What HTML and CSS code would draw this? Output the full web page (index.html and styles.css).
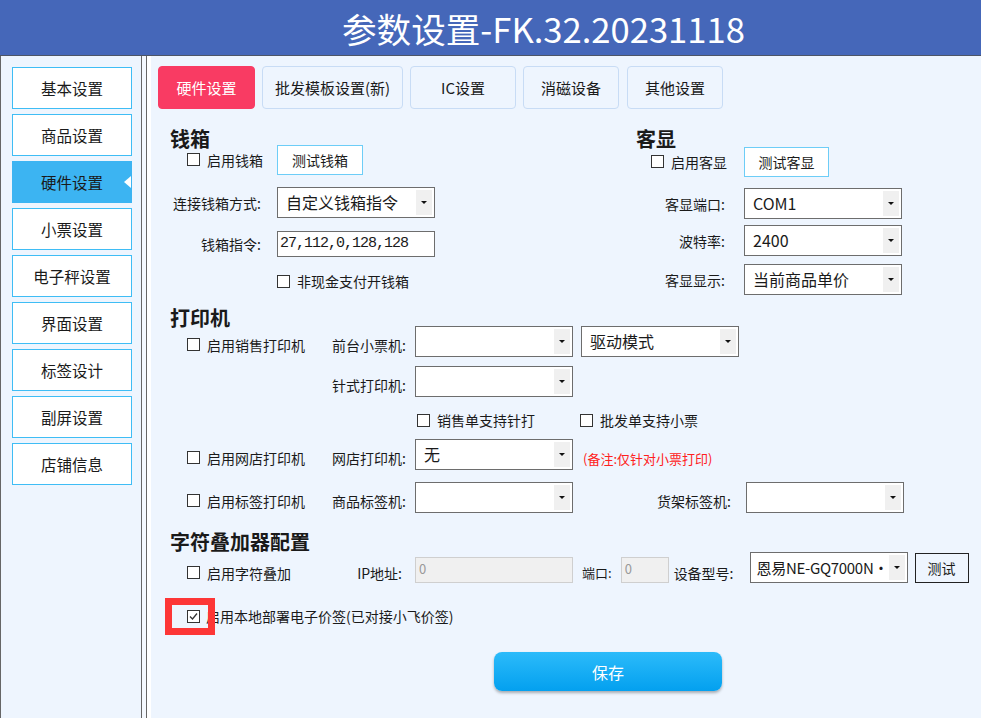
FILE: index.html
```html
<!DOCTYPE html>
<html lang="zh-CN">
<head>
    <meta charset="UTF-8">
    <meta name="viewport" content="width=device-width, initial-scale=1.0">
    <title>参数设置</title>
    <link rel="stylesheet" href="styles.css">
</head>
<body>
    <div class="header">
        <h1>参数设置-FK.32.20231118</h1>
    </div>
    <div class="layout">
        <aside class="sidebar">
            <div class="nav-item">基本设置</div>
            <div class="nav-item">商品设置</div>
            <div class="nav-item active">硬件设置</div>
            <div class="nav-item">小票设置</div>
            <div class="nav-item">电子秤设置</div>
            <div class="nav-item">界面设置</div>
            <div class="nav-item">标签设计</div>
            <div class="nav-item">副屏设置</div>
            <div class="nav-item">店铺信息</div>
        </aside>
        <div class="divider"></div>
        <main class="main">
            <div class="tabs">
                <div class="tab tab-hw active">硬件设置</div>
                <div class="tab tab-tpl">批发模板设置(新)</div>
                <div class="tab tab-ic">IC设置</div>
                <div class="tab tab-mag">消磁设备</div>
                <div class="tab tab-other">其他设置</div>
            </div>

            <div class="panel">
                <div class="cols">
                    <section class="col-cash">
                        <h2 class="group">钱箱</h2>
                        <div class="row cash-enable">
                            <div class="check-cell"><span class="check"><span class="box"></span>启用钱箱</span></div>
                            <button class="btn-test">测试钱箱</button>
                        </div>
                        <div class="row cash-mode">
                            <div class="lbl">连接钱箱方式:</div>
                            <div class="combo"><span class="combo-text">自定义钱箱指令</span><span class="combo-arrow"></span></div>
                        </div>
                        <div class="row cash-cmd">
                            <div class="lbl">钱箱指令:</div>
                            <div class="text-input mono">27,112,0,128,128</div>
                        </div>
                        <div class="row cash-noncash">
                            <span class="check"><span class="box"></span>非现金支付开钱箱</span>
                        </div>
                    </section>

                    <section class="col-display">
                        <h2 class="group">客显</h2>
                        <div class="row disp-enable">
                            <div class="check-cell"><span class="check"><span class="box"></span>启用客显</span></div>
                            <button class="btn-test btn-disp">测试客显</button>
                        </div>
                        <div class="row disp-port">
                            <div class="lbl">客显端口:</div>
                            <div class="combo"><span class="combo-text">COM1</span><span class="combo-arrow"></span></div>
                        </div>
                        <div class="row disp-baud">
                            <div class="lbl">波特率:</div>
                            <div class="combo"><span class="combo-text">2400</span><span class="combo-arrow"></span></div>
                        </div>
                        <div class="row disp-show">
                            <div class="lbl">客显显示:</div>
                            <div class="combo"><span class="combo-text">当前商品单价</span><span class="combo-arrow"></span></div>
                        </div>
                    </section>
                </div>

                <section class="printer">
                    <h2 class="group">打印机</h2>
                    <div class="row prow prow-first">
                        <div class="pcheck shift"><span class="check"><span class="box"></span>启用销售打印机</span></div>
                        <div class="plbl shift">前台小票机:</div>
                        <div class="combo"><span class="combo-text"></span><span class="combo-arrow"></span></div>
                        <div class="combo combo-mode"><span class="combo-text">驱动模式</span><span class="combo-arrow"></span></div>
                    </div>
                    <div class="row prow prow-dot">
                        <div class="pcheck"></div>
                        <div class="plbl shift">针式打印机:</div>
                        <div class="combo"><span class="combo-text"></span><span class="combo-arrow"></span></div>
                    </div>
                    <div class="row prow-opts">
                        <span class="check opt-sale"><span class="box"></span>销售单支持针打</span>
                        <span class="check"><span class="box"></span>批发单支持小票</span>
                    </div>
                    <div class="row prow prow-web">
                        <div class="pcheck shift"><span class="check"><span class="box"></span>启用网店打印机</span></div>
                        <div class="plbl shift">网店打印机:</div>
                        <div class="combo"><span class="combo-text">无</span><span class="combo-arrow"></span></div>
                        <span class="note shift">(备注:仅针对小票打印)</span>
                    </div>
                    <div class="row prow prow-label">
                        <div class="pcheck shift"><span class="check"><span class="box"></span>启用标签打印机</span></div>
                        <div class="plbl shift">商品标签机:</div>
                        <div class="combo"><span class="combo-text"></span><span class="combo-arrow"></span></div>
                        <div class="shelf-lbl shift">货架标签机:</div>
                        <div class="combo"><span class="combo-text"></span><span class="combo-arrow"></span></div>
                    </div>
                </section>

                <section class="overlay">
                    <h2 class="group">字符叠加器配置</h2>
                    <div class="row overlay-row">
                        <div class="pcheck"><span class="check"><span class="box"></span>启用字符叠加</span></div>
                        <div class="plbl ip-lbl">IP地址:</div>
                        <div class="text-input disabled ip-input">0</div>
                        <span class="small-lbl port-lbl">端口:</span>
                        <div class="text-input disabled port-input">0</div>
                        <span class="small-lbl model-lbl">设备型号:</span>
                        <div class="combo combo-model"><span class="combo-text">恩易NE-GQ7000N·</span><span class="combo-arrow"></span></div>
                        <button class="btn-plain">测试</button>
                    </div>
                </section>

                <div class="row price-tag">
                    <span class="highlight"></span>
                    <span class="check"><span class="box checked"><svg width="11" height="11" viewBox="0 0 11 11"><polyline points="2,5.5 4.5,8 9,2.5" fill="none" stroke="#333" stroke-width="1.3"/></svg></span>启用本地部署电子价签(已对接小飞价签)</span>
                </div>

                <button class="save">保存</button>
            </div>
        </main>
    </div>
</body>
</html>
```

FILE: styles.css
```css
* {
    box-sizing: border-box;
}
body {
    margin: 0;
    font-family: "Noto Sans CJK SC", "Noto Sans", sans-serif;
    font-size: 14px;
    color: #1a1a1a;
    background: #eef5fe;
}
button {
    font-family: inherit;
    color: #1a1a1a;
    padding: 0;
    cursor: pointer;
}
.header {
    height: 56px;
    background: #4567b9;
    border-bottom: 1px solid #4d5566;
}
.header h1 {
    margin: 0;
    padding-left: 342px;
    font-size: 34.6px;
    font-weight: normal;
    line-height: 57px;
    color: #fff;
}
.layout {
    display: flex;
    height: 662px;
}
.sidebar {
    width: 142px;
    border-left: 1px solid #666;
    border-right: 1px solid #666;
    background: #eef5fe;
    padding: 11px 0 0 11px;
    display: flex;
    flex-direction: column;
    gap: 5px;
}
.nav-item {
    position: relative;
    width: 120px;
    height: 42px;
    border: 1px solid #3fbdf5;
    background: #fff;
    display: flex;
    align-items: center;
    justify-content: center;
    font-size: 15.5px;
}
.nav-item.active {
    background: #3cb4f2;
    border-color: #3cb4f2;
}
.nav-item.active::after {
    content: "";
    position: absolute;
    right: 0;
    top: 50%;
    margin-top: -6px;
    border-right: 7px solid #fff;
    border-top: 6px solid transparent;
    border-bottom: 6px solid transparent;
}
.divider {
    width: 4px;
    background: #f4f8fe;
}
.main {
    flex: 1;
    border-left: 1px solid #666;
    padding: 10px 0 0 11px;
    box-shadow: inset 4px 0 0 #fff;
}
.tabs {
    display: flex;
    gap: 7px;
}
.tab {
    height: 43px;
    border: 1px solid #c8dcf5;
    border-radius: 4px;
    background: #eef5fe;
    font-size: 15px;
    display: flex;
    align-items: center;
    justify-content: center;
}
.tab.active {
    background: #f93b63;
    border-color: #f93b63;
    color: #fff;
}
.tab-hw { width: 97px; }
.tab-tpl { width: 141px; }
.tab-ic { width: 106px; }
.tab-mag { width: 96px; }
.tab-other { width: 96px; margin-left: 1px; }

.panel {
    padding-left: 12px;
}
.group {
    margin: 0;
    font-size: 20px;
    font-weight: bold;
    line-height: 24px;
}
.row {
    display: flex;
    align-items: center;
}
.check {
    display: inline-flex;
    align-items: center;
    gap: 7px;
    font-size: 14px;
    line-height: 20px;
    white-space: nowrap;
}
.box {
    width: 13px;
    height: 13px;
    border: 1px solid #333;
    background: #fff;
    display: flex;
    align-items: center;
    justify-content: center;
}
.lbl {
    text-align: right;
    white-space: nowrap;
}
.combo {
    width: 158px;
    height: 31px;
    border: 1px solid #6d6d6d;
    background: #fff;
    padding: 2px;
    display: flex;
}
.combo-text {
    flex: 1;
    overflow: hidden;
    white-space: nowrap;
    font-size: 16px;
    line-height: 25px;
    padding-left: 6px;
}
.combo-arrow {
    width: 16px;
    background: #f0f0f0;
    display: flex;
    align-items: center;
    justify-content: center;
}
.combo-arrow::after {
    content: "";
    border-top: 3px solid #111;
    border-left: 3px solid transparent;
    border-right: 3px solid transparent;
}
.text-input {
    width: 158px;
    height: 26px;
    border: 1px solid #6d6d6d;
    background: #fff;
    padding: 0 2px;
    line-height: 24px;
}
.mono {
    font-family: "Liberation Mono", monospace;
    font-size: 15px;
    letter-spacing: -1px;
}
.btn-test {
    height: 30px;
    width: 86px;
    border: 1px solid #6dcdf7;
    background: #fff;
    font-size: 14px;
}

/* 钱箱 / 客显 */
.cols {
    display: flex;
    margin-top: 18px;
}
.col-cash {
    width: 466px;
}
.col-cash .check-cell {
    width: 107px;
    padding-left: 17px;
}
.col-cash .lbl {
    width: 107px;
    padding-right: 16px;
}
.cash-enable {
    margin-top: -6px;
    height: 30px;
}
.cash-mode { margin-top: 12px; }
.cash-cmd { margin-top: 13px; }
.cash-noncash {
    margin-top: 14px;
    padding-left: 107px;
}
.col-display .check-cell {
    width: 108px;
    padding-left: 15px;
}
.col-display .lbl {
    width: 108px;
    padding-right: 19px;
}
.disp-enable {
    margin-top: -4px;
    height: 30px;
}
.btn-disp { width: 85px; }
.disp-port { margin-top: 11px; }
.disp-baud { margin-top: 6px; }
.disp-show { margin-top: 8px; }

/* 打印机 */
.printer {
    margin-top: 11px;
}
.pcheck {
    width: 162px;
    padding-left: 17px;
}
.plbl {
    width: 83px;
    white-space: nowrap;
}
.shift {
    margin-top: 7px;
}
.combo-mode {
    margin-left: 8px;
}
.prow-first { margin-top: -4px; }
.prow-dot { margin-top: 9px; }
.prow-opts {
    margin-top: 13px;
    padding-left: 247px;
}
.opt-sale {
    width: 163px;
}
.prow-web { margin-top: 9px; }
.prow-label { margin-top: 12px; }
.note {
    margin-left: 10px;
    font-size: 13px;
    color: #ff2020;
}
.shelf-lbl {
    width: 173px;
    padding-right: 15px;
    text-align: right;
}

/* 字符叠加器 */
.overlay {
    margin-top: 17px;
}
.overlay-row {
    margin-top: -2px;
    align-items: flex-end;
}
.overlay-row .pcheck,
.overlay-row .plbl,
.small-lbl {
    line-height: 20px;
}
.ip-lbl {
    text-align: right;
    padding-right: 13px;
}
.disabled {
    background: #f0f0f0;
    border-color: #cfcfcf;
    color: #999;
    font-size: 13px;
    line-height: 16px;
    padding: 3px 3px;
}
.port-lbl {
    margin-left: 9px;
    font-size: 13px;
}
.port-input {
    width: 48px;
    margin-left: 9px;
}
.model-lbl {
    margin-left: 5px;
}
.combo-model {
    margin-left: 16px;
}
.combo-model .combo-text {
    font-size: 15px;
    letter-spacing: -0.3px;
    padding-left: 4px;
}
.btn-plain {
    margin-left: 7px;
    width: 54px;
    height: 30px;
    border: 1px solid #222;
    background: transparent;
    font-size: 14px;
}

/* 电子价签 */
.price-tag {
    position: relative;
    margin-top: 23px;
    padding-left: 17px;
}
.price-tag .check {
    gap: 6px;
}
.highlight {
    position: absolute;
    left: -5px;
    top: -8px;
    width: 50px;
    height: 37px;
    border: 7px solid #fd3636;
}
.save {
    display: block;
    margin: 26px 0 0 324px;
    width: 228px;
    height: 39px;
    border: none;
    border-radius: 8px;
    background: linear-gradient(#2cbbfa, #03a0ef);
    box-shadow: 0 2px 3px rgba(0, 0, 0, 0.3);
    color: #fff;
    font-size: 16px;
}
```
